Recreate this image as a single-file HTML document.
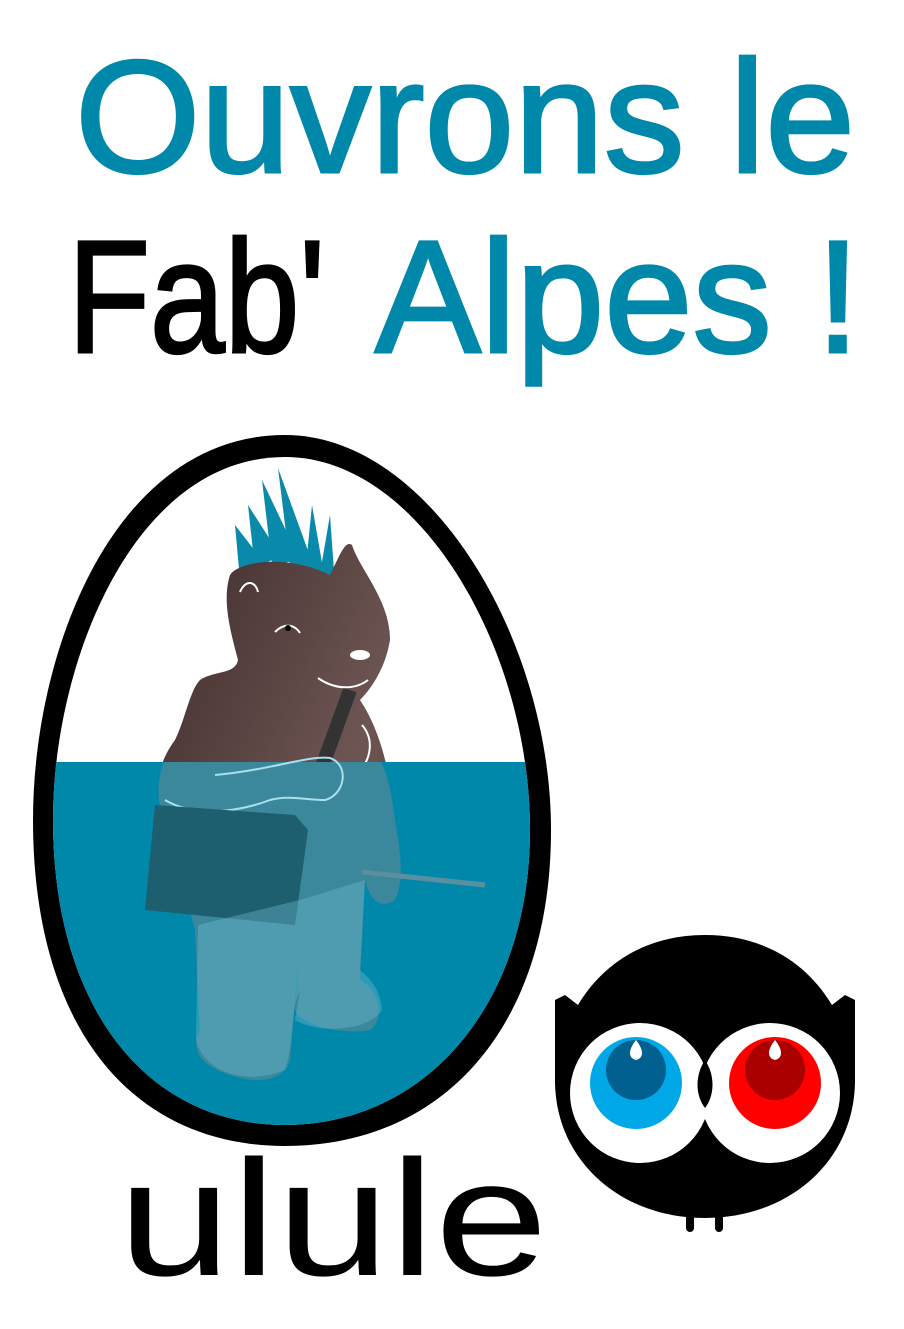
<!DOCTYPE html>
<html><head><meta charset="utf-8"><style>html,body{margin:0;padding:0;background:#fff}svg{display:block}</style></head>
<body>
<svg width="904" height="1329" viewBox="0 0 904 1329" xmlns="http://www.w3.org/2000/svg">
<defs>
<linearGradient id="fur" x1="0" y1="0" x2="1" y2="1">
<stop offset="0" stop-color="#3e2c2c"/><stop offset="0.6" stop-color="#6d5552"/><stop offset="1" stop-color="#4a3636"/>
</linearGradient>
<clipPath id="inner"><path d="M285 457 C135 457 53 660 53 820 C53 1005 145 1125 285 1125 C425 1125 530 1005 530 830 C530 650 420 457 285 457 Z"/></clipPath>
<clipPath id="water"><rect x="0" y="762" width="600" height="400"/></clipPath>
</defs>
<text x="75" y="172" font-family="Liberation Sans, sans-serif" font-size="160" fill="#0088aa" stroke="#0088aa" stroke-width="3" textLength="780" lengthAdjust="spacingAndGlyphs">Ouvrons le</text>
<text x="68" y="352" font-family="Liberation Sans, sans-serif" font-size="160" fill="#000" stroke="#000" stroke-width="3" textLength="257" lengthAdjust="spacingAndGlyphs">Fab'</text>
<text x="375" y="352" font-family="Liberation Sans, sans-serif" font-size="160" fill="#0088aa" stroke="#0088aa" stroke-width="3" textLength="485" lengthAdjust="spacingAndGlyphs">Alpes !</text>

<path d="M285 435 C115 435 33 650 33 820 C33 1025 130 1146 285 1146 C445 1146 551 1025 551 830 C551 640 430 435 285 435 Z" fill="#000"/>
<path d="M285 457 C135 457 53 660 53 820 C53 1005 145 1125 285 1125 C425 1125 530 1005 530 830 C530 650 420 457 285 457 Z" fill="#fff"/>
<g clip-path="url(#inner)">
<g fill="#0a8aaa">
<path d="M240 580 L235 525 L262 560 Z"/><path d="M255 570 L248 505 L280 555 Z"/><path d="M272 565 L262 480 L300 560 Z"/>
<path d="M290 565 L278 468 L315 570 Z"/><path d="M305 575 L312 505 L325 580 Z"/><path d="M318 585 L330 515 L335 585 Z"/>
</g>
<path d="M230 575 C240 560 290 555 330 575 C340 555 345 540 352 545 C360 570 390 600 390 640 C385 670 370 690 360 700 C380 730 390 770 395 820 C400 850 405 880 395 900 C380 910 370 900 365 880 L360 980 C380 990 385 1020 370 1030 C340 1035 300 1025 295 1010 L300 940 L290 1060 C285 1080 260 1085 230 1075 C200 1065 190 1050 200 1030 L195 930 L165 820 C150 790 160 760 175 740 C185 720 190 690 200 680 C215 670 235 675 238 660 C230 630 222 600 230 575 Z" fill="url(#fur)"/>
<path d="M350 690 L310 800" stroke="#333" stroke-width="14"/>
<g fill="none" stroke="#fff" stroke-width="2">
<path d="M318 678 C335 690 355 690 368 680"/><path d="M240 592 C245 580 255 580 258 592"/><path d="M275 632 C285 622 295 625 300 633"/>
<path d="M362 725 C375 740 370 760 360 770"/>
</g>
<ellipse cx="360" cy="655" rx="10" ry="5" fill="#fff"/>
<circle cx="288" cy="628" r="3" fill="#000"/>
<rect x="0" y="762" width="600" height="400" fill="#0088aa"/>
<path clip-path="url(#water)" d="M175 740 C155 770 155 800 165 820 L195 930 L200 1030 C190 1050 200 1065 230 1075 C260 1085 285 1080 290 1060 L300 940 L295 1010 C300 1025 340 1035 370 1030 C385 1020 380 990 360 980 L365 880 C370 900 380 910 395 900 C405 880 400 850 395 820 C390 780 385 770 380 760 Z" fill="#4f8797" opacity="0.75"/>
<g fill="none" stroke="#a8e0ee" stroke-width="2">
<path d="M215 775 C270 770 310 755 330 758 C350 765 345 795 325 800 C305 800 290 795 270 800 C230 815 190 815 165 800"/>
</g>
<path d="M155 805 L295 815 L308 830 L295 925 L145 910 Z" fill="#1d5f6e"/>
<path d="M362 872 L485 885" stroke="#5a8fa0" stroke-width="5"/>
<path d="M198 925 L196 1040 C205 1075 250 1085 285 1070 C295 1040 290 1010 300 990 L295 1020 C320 1035 370 1030 382 1010 C380 985 365 975 360 970 L365 880 L300 900 Z" fill="#6fb9cf" opacity="0.4"/>
</g>

<path d="M555 1000 L565 995 L578 1005 C605 960 650 935 705 935 C760 935 805 960 832 1005 L845 995 L855 1000 L855 1080 C855 1160 790 1218 705 1218 C620 1218 555 1160 555 1080 Z" fill="#000"/>
<rect x="686" y="1212" width="8" height="20" rx="4" fill="#000"/>
<rect x="715" y="1212" width="8" height="20" rx="4" fill="#000"/>
<circle cx="640" cy="1093" r="70" fill="#fff"/>
<circle cx="770" cy="1093" r="70" fill="#fff"/>
<circle cx="636" cy="1083" r="46" fill="#00a8e8"/>
<circle cx="636" cy="1070" r="30" fill="#006090"/>
<circle cx="775" cy="1083" r="46" fill="#ff0000"/>
<circle cx="775" cy="1070" r="30" fill="#aa0000"/>
<path d="M636 1040 C628 1050 628 1058 636 1060 C644 1058 644 1050 636 1040 Z" fill="#fff"/>
<path d="M775 1040 C767 1050 767 1058 775 1060 C783 1058 783 1050 775 1040 Z" fill="#fff"/>
<path d="M705 1060 C695 1075 695 1095 705 1108 C715 1095 715 1075 705 1060 Z" fill="#000"/>

<text x="118" y="1275" font-family="Liberation Sans, sans-serif" font-size="165" fill="#000" textLength="430" lengthAdjust="spacingAndGlyphs">ulule</text>
</svg>
</body></html>
